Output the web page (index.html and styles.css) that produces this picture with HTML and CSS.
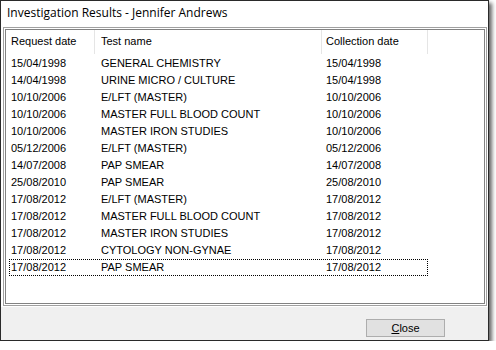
FILE: index.html
```html
<!DOCTYPE html>
<html lang="en">
<head>
  <meta charset="UTF-8" />
  <title>Investigation Results - Jennifer Andrews</title>
  <link rel="stylesheet" href="styles.css">
</head>
<body>
  <div class="window">
    <div class="titlebar">Investigation Results - Jennifer Andrews</div>

    <div class="listview">
      <div class="row head">
        <div class="cell">Request date</div>
        <div class="cell">Test name</div>
        <div class="cell">Collection date</div>
        <div class="cell"></div>
      </div>
      <div class="row"><div class="cell">15/04/1998</div><div class="cell">GENERAL CHEMISTRY</div><div class="cell">15/04/1998</div></div>
      <div class="row"><div class="cell">14/04/1998</div><div class="cell">URINE MICRO / CULTURE</div><div class="cell">15/04/1998</div></div>
      <div class="row"><div class="cell">10/10/2006</div><div class="cell">E/LFT (MASTER)</div><div class="cell">10/10/2006</div></div>
      <div class="row"><div class="cell">10/10/2006</div><div class="cell">MASTER FULL BLOOD COUNT</div><div class="cell">10/10/2006</div></div>
      <div class="row"><div class="cell">10/10/2006</div><div class="cell">MASTER IRON STUDIES</div><div class="cell">10/10/2006</div></div>
      <div class="row"><div class="cell">05/12/2006</div><div class="cell">E/LFT (MASTER)</div><div class="cell">05/12/2006</div></div>
      <div class="row"><div class="cell">14/07/2008</div><div class="cell">PAP SMEAR</div><div class="cell">14/07/2008</div></div>
      <div class="row"><div class="cell">25/08/2010</div><div class="cell">PAP SMEAR</div><div class="cell">25/08/2010</div></div>
      <div class="row"><div class="cell">17/08/2012</div><div class="cell">E/LFT (MASTER)</div><div class="cell">17/08/2012</div></div>
      <div class="row"><div class="cell">17/08/2012</div><div class="cell">MASTER FULL BLOOD COUNT</div><div class="cell">17/08/2012</div></div>
      <div class="row"><div class="cell">17/08/2012</div><div class="cell">MASTER IRON STUDIES</div><div class="cell">17/08/2012</div></div>
      <div class="row"><div class="cell">17/08/2012</div><div class="cell">CYTOLOGY NON-GYNAE</div><div class="cell">17/08/2012</div></div>
      <div class="row focused"><div class="cell">17/08/2012</div><div class="cell">PAP SMEAR</div><div class="cell">17/08/2012</div></div>
    </div>

    <div class="footer">
      <button type="button" class="btn"><u>C</u>lose</button>
    </div>
  </div>
</body>
</html>
```

FILE: styles.css
```css
body {
  margin: 0;
  background: #fff;
  font-family: 'Liberation Sans', Arial, sans-serif;
  font-size: 11px;
  color: #000;
}
.window {
  width: 487px;
  height: 339px;
  border: 1px solid #2a2a2a;
  background: #fff;
  display: flex;
  flex-direction: column;
  box-shadow: 3px 3px 4px rgba(0, 0, 0, 0.6);
}
.titlebar {
  height: 26px;
  line-height: 24px;
  padding-left: 6px;
  font-family: 'Open Sans', 'Noto Sans', sans-serif;
  font-size: 12px;
}
.listview {
  flex: 1;
  margin: 0 1px 0 2px;
  border: 1px solid #a0a0a0;
  box-shadow: inset 0 0 0 1px #fff, inset 0 0 0 2px #828282;
  padding: 2px 1px;
}
.row {
  display: grid;
  grid-template-columns: 90px 227px 106px 1fr;
  height: 17px;
  line-height: 17px;
  white-space: nowrap;
}
.row .cell {
  padding-left: 6px;
}
.row .cell:nth-child(3) {
  padding-left: 4px;
}
.row.head {
  height: 24px;
  line-height: 22px;
  margin-bottom: 1px;
}
.row.head .cell {
  border-right: 1px solid #e5e5e5;
}
.row.head .cell:last-child {
  border-right: none;
}
.row.focused {
  grid-template-columns: 86px 227px 106px;
  margin-left: 4px;
  width: 419px;
  outline: 1px dotted #000;
  outline-offset: -1px;
}
.row.focused .cell:first-child {
  padding-left: 2px;
}
.footer {
  height: 33px;
  background: #f0f0f0;
  border-top: 1px solid #fff;
  display: flex;
  justify-content: flex-end;
  align-items: flex-start;
  padding-right: 43px;
}
.btn {
  margin-top: 12px;
  width: 79px;
  height: 18px;
  padding: 0;
  background: #e1e1e1;
  border: 1px solid #adadad;
  font-family: 'Liberation Sans', Arial, sans-serif;
  font-size: 11px;
  color: #000;
}
```
